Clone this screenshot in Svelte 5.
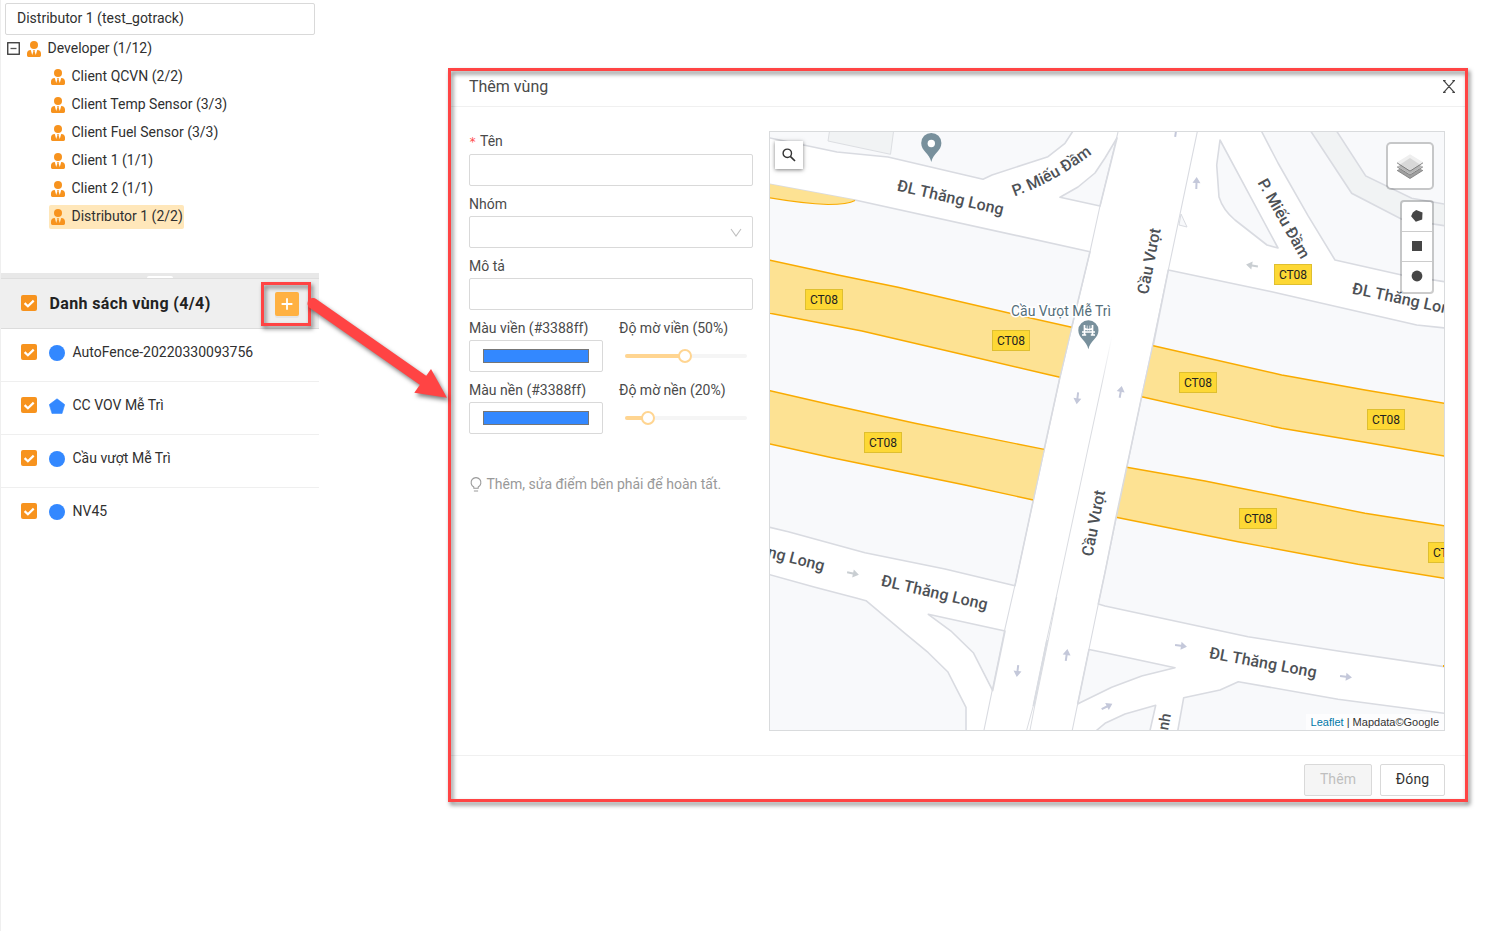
<script>
  const clients = [
    'Client QCVN (2/2)',
    'Client Temp Sensor (3/3)',
    'Client Fuel Sensor (3/3)',
    'Client 1 (1/1)',
    'Client 2 (1/1)',
    'Distributor 1 (2/2)'
  ];
  const zones = [
    { name: 'AutoFence-20220330093756', shape: 'circle' },
    { name: 'CC VOV Mễ Trì', shape: 'polygon' },
    { name: 'Cầu vượt Mễ Trì', shape: 'circle' },
    { name: 'NV45', shape: 'circle' }
  ];
  const styleRows = [
    { color: 'Màu viền (#3388ff)', opacity: 'Độ mờ viền (50%)', value: 49.5 },
    { color: 'Màu nền (#3388ff)', opacity: 'Độ mờ nền (20%)', value: 19 }
  ];
  const blocks = [
    '760,136 770,138 837,152 888,157 983,179.3 992,175 1048,156.7 1065,143.3 1073,131 1073,120 760,120',
    '1060,197.3 1078,187 1095,173 1105,158 1117,138 1100,206',
    '760,182.5 770,184.3 855,200 1090,251.7 1071.7,327 1060,377 1044,450 1033.3,500 1015,585.7 945,569 865,552.7 788.3,531.7 760,525',
    '760,572 815,587.3 857,598.3 866,600.7 905,633.3 928.3,652.7 947.7,671.7 966,707.3 966,740 760,740',
    '928.3,614.3 1005,631 992.7,690.7 973.3,652.7 951.7,631.7',
    '1168.3,270 1271.7,291.7 1416.7,325 1450,328.5 1450,667.5 1338,651 1248,636.7 1105,606 1098.3,604 1105,572.7 1116,517.3 1126.7,467.3 1141.7,396.7 1153.3,345',
    '1089,649.5 1105,652.7 1175,667.7 1141.7,676 1111.7,687.3 1080,702.7 1077.7,704',
    '1092,735 1097,730 1105,723.3 1125,714 1155.7,705.3 1149,735',
    '1177,735 1183.7,697.7 1220,690 1238.3,681.7 1338,699.3 1450,714 1450,740',
    '1258,125 1261.7,131.7 1278,163 1308,215.7 1335,260 1401.7,275 1450,282.5 1450,120'
  ];
  const bands = [
    ['760,258 770,260.2 838,275 898,287.3 1010,313.3 1071.7,327.3', '1060,377.3 1048,374.5 965,355 862,331 770,313.3 760,311'],
    ['760,388.5 770,390.7 832,405 915,423.3 1044.3,449.4', '1033.3,500 965,485 832,457.7 770,444 760,442'],
    ['1153.3,345.7 1281.7,375 1291.7,376.7 1365,390 1450,404.3', '1450,457 1365,442.3 1281.7,428.3 1141.7,396.7'],
    ['1126.7,467.3 1205,481 1288,497.7 1365,513.3 1450,526.7', '1450,579.3 1358,564.3 1238,541.7 1116,517.3']
  ];
  const shields = [
    [805, 289], [992, 330], [1274, 264], [1179, 372], [1367, 409], [864, 432], [1239, 508], [1428, 542]
  ];
  const arrows = [
    [1196.5, 183, -88, '#c4c8da'], [1176, 131, -82, '#c4c8da'], [1252, 265.5, 190, '#c9ced2'],
    [1077.4, 398.3, 97, '#c4c8da'], [1066.6, 655, -82, '#c4c8da'], [1017.5, 671, 97, '#c4c8da'],
    [853, 573.5, 12, '#c9ced2'], [1107, 706.5, -27, '#c4c8da'], [1120.7, 391.8, -80, '#c4c8da'],
    [1181, 645.8, 8, '#c4c8da'], [1346, 676.7, 7, '#c4c8da']
  ];
  const roads = [
    ['ĐL Thăng Long', 950.5, 197.5, 13, 'middle', 109],
    ['P. Miếu Đầm', 1284, 218.5, 60.5, 'middle', 89],
    ['ĐL Thăng Long', 1352.5, 288, 12, 'start', 109],
    ['Cầu Vượt', 1149, 261, -79, 'middle', 67],
    ['Cầu Vượt', 1093.5, 523, -79, 'middle', 67],
    ['ĐL Thăng Long', 934.5, 592.5, 13, 'middle', 109],
    ['ĐL Thăng Long', 824.5, 566, 14.5, 'end', 109],
    ['ĐL Thăng Long', 1263, 662.5, 10.5, 'middle', 109]
  ];
</script>

{#snippet person()}
  <svg class="person" viewBox="0 0 14 16" width="14" height="16">
    <circle cx="7" cy="4" r="4" fill="#f7931e" />
    <path d="M3.8 9 C1.2 9 0 10.6 0 12.6 V14.6 Q0 16 1.4 16 H12.6 Q14 16 14 14.6 V12.6 C14 10.6 12.8 9 10.2 9 L8.8 14 L7.6 10.6 L8.1 9.3 H5.9 L6.4 10.6 L5.2 14 Z" fill="#f7931e" />
  </svg>
{/snippet}

{#snippet check()}
  <span class="check">
    <svg viewBox="0 0 16 16" width="16" height="16"><path d="M3.6 8.1 L6.9 11.2 L12.7 5.6" fill="none" stroke="#fff" stroke-width="2.2" /></svg>
  </span>
{/snippet}

<div class="page">
  <aside>
    <div class="picked">Distributor 1 (test_gotrack)</div>
    <div class="tree">
      <div class="node root">
        <svg class="toggle" viewBox="0 0 13 13" width="13" height="13"><rect x=".75" y=".75" width="11.5" height="11.5" fill="#fff" stroke="#333" stroke-width="1.3" /><path d="M3.5 6.5 H9.5" stroke="#555" stroke-width="1.3" /></svg>
        {@render person()}<span>Developer (1/12)</span>
      </div>
      {#each clients as c, i}
        <div class="node child" class:selected={i === 5}>{@render person()}<span>{c}</span></div>
      {/each}
    </div>
    <div class="splitter"><i></i></div>
    <div class="zones-head">
      {@render check()}
      <b>Danh sách vùng (4/4)</b>
      <button class="add" aria-label="Thêm">
        <svg viewBox="0 0 24 24" width="24" height="24"><path d="M12 6.2 V17.8 M6.6 12 H17.4" stroke="#fff" stroke-width="1.8" /></svg>
      </button>
    </div>
    {#each zones as z}
      <div class="zone">
        {@render check()}
        <svg class="shape" viewBox="0 0 16 16" width="16" height="16">
          {#if z.shape === 'circle'}
            <circle cx="8" cy="8" r="8" fill="#3388ff" />
          {:else}
            <path d="M8 .8 L15.7 6.6 L13 15.6 H3 L.3 6.6 Z" fill="#3388ff" stroke="#3388ff" stroke-width=".6" stroke-linejoin="round" />
          {/if}
        </svg>
        <span>{z.name}</span>
      </div>
    {/each}
  </aside>

  <section class="modal">
    <header>
      <span>Thêm vùng</span>
      <svg viewBox="0 0 12 13" width="12" height="13"><path d="M1 .8 L11 12.2 M11 .8 L1 12.2 M0 .6 H2.6 M9.4 .6 H12 M0 12.4 H2.6 M9.4 12.4 H12" stroke="#444" stroke-width="1.2" /></svg>
    </header>
    <div class="body">
      <form>
        <div class="label required"><em>*</em>Tên</div>
        <div class="field"></div>
        <div class="label">Nhóm</div>
        <div class="field select">
          <svg viewBox="0 0 12 10" width="12" height="10"><path d="M1 1 L6 8 L11 1" fill="none" stroke="#bfbfbf" stroke-width="1.1" /></svg>
        </div>
        <div class="label">Mô tả</div>
        <div class="field"></div>
        {#each styleRows as r}
          <div class="pair">
            <div>
              <div class="label">{r.color}</div>
              <div class="field color"><i></i></div>
            </div>
            <div>
              <div class="label">{r.opacity}</div>
              <div class="slider"><div class="rail"><div class="track" style="width:{r.value}%"><i></i></div></div></div>
            </div>
          </div>
        {/each}
        <div class="hint">
          <svg viewBox="0 0 14 16" width="14" height="16"><path d="M4.8 11.2 V9.9 A4.9 4.9 0 1 1 9.2 9.9 V11.2 Z M4.9 14 H9.1" fill="none" stroke="#999" stroke-width="1.1" stroke-linejoin="round" /></svg>
          <span>Thêm, sửa điểm bên phải để hoàn tất.</span>
        </div>
      </form>

      <div class="map">
        <svg class="tiles" viewBox="770 132 674 598" width="674" height="598">
          <defs>
            <linearGradient id="fade" gradientUnits="userSpaceOnUse" x1="0" y1="336" x2="0" y2="385">
              <stop offset="0" stop-color="#dadce1" stop-opacity="0" />
              <stop offset="1" stop-color="#dadce1" />
            </linearGradient>
          </defs>
          <rect x="770" y="132" width="674" height="598" fill="#fff" />
          <g fill="#f8f9fb" stroke="#d9dbe1" stroke-width="1.6" stroke-linejoin="round">
            {#each blocks as b}<polygon points={b} />{/each}
            <path d="M1220 140 L1278 248 L1267 245 L1235 220 Q1223 210 1219 197 L1216.7 165 Z" />
            <path d="M1181 214 L1187 227 L1179 225 Z" stroke-width="1" />
          </g>
          <path d="M830 128 L828 141 L890.5 154.3 L894 128 Z" fill="#f1f3f4" stroke="#dcdee2" />
          <path d="M1308 127 L1351.7 193.3 L1401.7 219.3 L1450 226.5 V205 L1411.7 198.3 L1365.7 176 L1334 127 Z" fill="#f1f3f4" stroke="#d9dbe1" stroke-width="1.6" />
          <path d="M765 183.3 L855 200 Q848 204.5 828 204.5 Q802 203.5 765 197 Z" fill="#fde293" />
          <path d="M765 197 Q802 203.5 828 204.5 Q848 204.5 855 200.5" fill="none" stroke="#f9ab00" stroke-width="1.1" />
          {#each bands as [top, bottom]}
            <polygon points="{top} {bottom}" fill="#fde293" />
            <polyline points={top} fill="none" stroke="#f9ab00" stroke-width="1.4" />
            <polyline points={bottom} fill="none" stroke="#f9ab00" stroke-width="1.4" />
          {/each}
          <path d="M1118 132 L1100 206 L1090 251.7 L1060 377 L1015 585 L1004.3 631.7 L984 730 M1197.3 131.7 L1168.3 270 L1141.7 396.7 L1098.3 604 L1072.3 730" fill="none" stroke="#d9dbe1" stroke-width="1.1" />
          <path d="M1112 336 L1101.700 385" stroke="url(#fade)" fill="none" />
          <path d="M1101.7 385 L1087.7 450 L1056.7 595 L1046.7 640 L1033 707 L1026.7 730 M1056.7 597 L1048.3 640 L1034.5 707 L1030 730" fill="none" stroke="#dadce1" stroke-width="1" />
          <path d="M1047.2 640 L1033.5 706" stroke="#d9dce2" stroke-width="2" />
          <path d="M1443 666 H1444" stroke="#f9ab00" stroke-width="2" />

          {#each arrows as [x, y, a, c]}
            <path transform="translate({x} {y}) rotate({a})" d="M-6 -1 H0 V-4 L6 0 L0 4 V1 H-6 Z" fill={c} />
          {/each}

          <g class="road">
            {#each roads as [t, x, y, a, anchor, len]}
              <text transform="translate({x} {y}) rotate({a})" y="5.5" text-anchor={anchor} textLength={len}>{t}</text>
            {/each}
            <path id="mieu" d="M1014.5 196.500 Q1060 180 1098 149" fill="none" />
            <text><textPath href="#mieu" textLength="89">P. Miếu Đầm</textPath></text>
            <text class="lane" transform="translate(1166 713.500) rotate(-80)" y="5" text-anchor="end">nh</text>
          </g>

          {#each shields as [x, y]}
            <rect x={x + 0.5} y={y + 0.5} width="37" height="20" fill="#fdd835" stroke="#dfbf2f" />
            <text class="shield" x={x + 19} y={y + 14.5} text-anchor="middle" textLength="28">CT08</text>
          {/each}

          <g fill="#78909c">
            <path d="M931.3 162 C929.5 153.5 921.2 151 921.2 143 A10.1 10.1 0 1 1 941.4 143 C941.4 151 933.1 153.5 931.3 162 Z" />
            <path transform="translate(157.1 187.3)" d="M931.3 162 C929.5 153.5 921.2 151 921.2 143 A10.1 10.1 0 1 1 941.4 143 C941.4 151 933.1 153.5 931.3 162 Z" />
          </g>
          <circle cx="931.3" cy="143.5" r="3.7" fill="#fff" />
          <path d="M1084.5 325 V334.500 M1092.500 325 V334.500 M1082 332 H1095 M1084.5 328.500 Q1088.500 330.500 1092.500 328.500 M1082 335 H1086.200 M1090.800 335 H1095" fill="none" stroke="#fff" stroke-width="1.7" />
          <path d="M1087.200 325.500 V331 M1089.800 325.500 V331" stroke="#fff" stroke-width=".7" />
          <text class="poi" x="1061" y="316" text-anchor="middle" textLength="100">Cầu Vượt Mễ Trì</text>
        </svg>
        <div class="search">
          <svg viewBox="0 0 14 14" width="14" height="14"><circle cx="5.3" cy="5.3" r="4.2" fill="none" stroke="#333" stroke-width="1.4" /><path d="M8.3 8.3 L13 13" stroke="#333" stroke-width="1.7" /></svg>
        </div>
        <div class="layers">
          <svg viewBox="0 0 28 28" width="28" height="28">
            <path d="M14 10.600 L27 18.300 L14 26.500 L1 18.300 Z" fill="#a0a0a0" />
            <path d="M1 18.300 L14 26.500 L27 18.300" fill="none" stroke="#777" stroke-width=".8" />
            <path d="M14 7 L27 14.500 L14 22.700 L1 14.500 Z" fill="#b5b5b5" stroke="#fff" stroke-width=".6" />
            <path d="M1 14.800 L14 23 L27 14.800" fill="none" stroke="#777" stroke-width=".9" />
            <path d="M14 2.200 L27 10.300 L14 18.700 L1 10.300 Z" fill="#efefef" />
            <path d="M14 6 L23.500 12.200 L14 18.200 L4.500 12.200 Z" fill="#d8d8d8" />
            <path d="M1 10.800 L14 19.100 L27 10.800" fill="none" stroke="#777" stroke-width=".9" />
          </svg>
        </div>
        <div class="draw">
          <span><svg viewBox="0 0 12 12" width="12" height="12"><path d="M5.200 .1 L11.5 2.4 L11.200 9.500 L4.800 11.700 L.1 6.3 L1.800 2.500 Z" fill="#464646" /></svg></span>
          <span><svg viewBox="0 0 12 12" width="12" height="12"><path d="M1 1 H11 V11 H1 Z" fill="#464646" /></svg></span>
          <span><svg viewBox="0 0 12 12" width="12" height="12"><circle cx="6" cy="6" r="5.4" fill="#464646" /></svg></span>
        </div>
        <div class="credit"><a href="#leaflet">Leaflet</a> | Mapdata©Google</div>
      </div>
    </div>
    <footer>
      <button class="btn off">Thêm</button>
      <button class="btn">Đóng</button>
    </footer>
  </section>

  <div class="mark mark-add"></div>
  <div class="mark mark-modal"></div>
  <svg class="pointer" viewBox="300 290 160 125" width="160" height="125">
    <path d="M313 303.500 L424 381" stroke="#ff4444" stroke-width="11" stroke-linecap="round" />
    <path d="M447 397.7 L414.3 392.7 L431 369 Z" fill="#ff4444" />
  </svg>
</div>

<style>
  :global(body) { background: #fff; overflow: hidden; }
  * { box-sizing: border-box; }
  .page {
    position: relative;
    display: flex;
    align-items: flex-start;
    width: 1505px;
    height: 931px;
    border-left: 1px solid #efefef;
    font: 14px/22px Roboto, sans-serif;
    color: #303030;
    overflow: hidden;
  }
  svg { display: block; flex: none; }
  aside { width: 318px; flex: none; padding-top: 3px; }
  .picked {
    width: 310px; height: 32px; margin-left: 4px; padding: 3px 11px;
    border: 1px solid #d9d9d9; border-radius: 2px;
  }
  .tree { display: flex; flex-direction: column; align-items: flex-start; gap: 4px; height: 238px; padding-top: 2px; }
  .node { display: flex; height: 24px; padding-right: 1.5px; border-radius: 2px; white-space: nowrap; }
  .person { margin-top: 4px; }
  .node span { margin-left: 6.5px; }
  .root { margin-left: 6px; }
  .root .person { margin-left: 7px; }
  .toggle { margin-top: 5px; }
  .child { margin-left: 48px; padding-left: 2px; }
  .selected { background: #ffe7ba; }
  .splitter { display: flex; justify-content: center; align-items: flex-end; height: 6px; background: #e8e8e8; border-bottom: 1px solid #dedede; }
  .splitter i { width: 26px; height: 2px; background: #fff; border-radius: 2px 2px 0 0; }
  .zones-head { display: flex; align-items: center; height: 50px; padding: 0 20px; background: #efefef; border-bottom: 1px solid #dcdcdc; }
  .zones-head b { flex: 1; margin-left: 12.5px; font-size: 16px; font-weight: 700; letter-spacing: 0.38px; color: #222; }
  .zones-head .check { margin-top: -2px; }
  .check { width: 16px; height: 16px; flex: none; background: #f7931e; border-radius: 2px; }
  .add { width: 24px; height: 24px; padding: 0; border: 0; border-radius: 2px; background: #ffb142; box-shadow: 0 2px 0 rgba(0, 0, 0, 0.045); }
  .zone { display: flex; align-items: flex-start; height: 53px; padding: 15px 20px 0; border-bottom: 1px solid #efefef; }
  .zone:last-child { border: 0; }
  .zone .shape { margin: 1px 7.5px 0 12px; }
  .zone span:last-child { margin-top: -3px; }

  .modal { width: 1014px; height: 728px; margin: 71px 0 0 132px; color: #4a4a4a; flex: none; }
  header { display: flex; justify-content: space-between; align-items: center; height: 36px; padding: 0 10px 4px 18px; border-bottom: 1px solid #f0f0f0; font-size: 16px; }
  .body { display: flex; gap: 16px; height: 648px; padding: 24px 18px 0; }
  form { width: 284px; margin-top: -7px; }
  .label { height: 30px; padding-top: 7px; white-space: nowrap; }
  .required { display: flex; padding-top: 6px; }
  .label em { width: 11px; padding-top: 3px; color: #ff4d4f; font: 12px/18px "DejaVu Sans Mono", monospace; }
  .field { display: flex; align-items: center; height: 32px; border: 1px solid #d9d9d9; border-radius: 2px; }
  .select { justify-content: flex-end; padding: 2px 10px 0 0; }
  .pair { display: grid; grid-template-columns: 134px 134px; gap: 16px; }
  .color { justify-content: center; }
  .color i { width: 106px; height: 14px; margin-right: 1px; background: #3388ff; border: 1px solid #767676; }
  .slider { display: flex; align-items: center; height: 32px; padding: 0 6px; }
  .rail { flex: 1; height: 4px; background: #f5f5f5; border-radius: 2px; }
  .track { position: relative; height: 4px; background: #ffd591; border-radius: 2px; }
  .track i { position: absolute; right: -7px; top: -5px; width: 14px; height: 14px; border: 2px solid #ffd591; border-radius: 50%; background: #fff; }
  .hint { display: flex; gap: 3.5px; margin-top: 39px; color: #999; white-space: nowrap; }
  .hint svg { margin-top: 4px; }

  .map { position: relative; width: 676px; height: 600px; border: 1px solid #d9dbdd; overflow: hidden; }
  .road text { font: 500 16px Roboto, sans-serif; fill: #4d5156; paint-order: stroke; stroke: #fff; stroke-width: 2px; }
  .road .lane { font-size: 15px; }
  .shield { font: 12px Roboto, sans-serif; fill: #222; }
  .poi { font: 14px Roboto, sans-serif; fill: #546e7a; paint-order: stroke; stroke: #fff; stroke-width: 3px; }
  .search { position: absolute; left: 5px; top: 9px; display: grid; place-items: center; width: 28px; height: 28px; background: #fff; box-shadow: 0 1px 4px rgba(0, 0, 0, 0.5); }
  .layers { position: absolute; right: 10px; top: 10px; display: grid; place-items: center; width: 48px; height: 48px; border: 2px solid rgba(0, 0, 0, 0.2); border-radius: 5px; background: #fff; background-clip: padding-box; }
  .draw { position: absolute; right: 10px; top: 68px; width: 34px; border: 2px solid rgba(0, 0, 0, 0.2); border-radius: 4px; background: #fff; background-clip: padding-box; }
  .draw span { display: grid; place-items: center; height: 30px; padding-bottom: 1px; border-bottom: 1px solid #ccc; }
  .draw span:last-child { border: 0; padding-bottom: 2px; }
  .credit { position: absolute; right: 0; bottom: 0; padding: 0 5px; background: rgba(255, 255, 255, 0.7); font: 11px/16px "Liberation Sans", Arial, sans-serif; color: #333; }
  .credit a { color: #0078a8; text-decoration: none; }
  footer { display: flex; justify-content: flex-end; gap: 8px; height: 44px; padding: 8px 20px 0; border-top: 1px solid #f0f0f0; }
  .btn { width: 65px; height: 32px; padding: 0 0 2px; border: 1px solid #d9d9d9; border-radius: 2px; background: #fff; color: #333; font: 14px Roboto, sans-serif; letter-spacing: 0.1px; }
  .off { width: 68px; background: #f5f5f5; color: #bfbfbf; }

  .mark { position: absolute; border: 3px solid #ff4444; filter: drop-shadow(2px 3px 2px rgba(0, 0, 0, 0.5)); }
  .mark-add { left: 260px; top: 282px; width: 50px; height: 44px; }
  .mark-modal { left: 447px; top: 68px; width: 1020px; height: 734px; }
  .pointer { position: absolute; left: 299px; top: 290px; filter: drop-shadow(2px 3px 2px rgba(0, 0, 0, 0.5)); }
</style>
